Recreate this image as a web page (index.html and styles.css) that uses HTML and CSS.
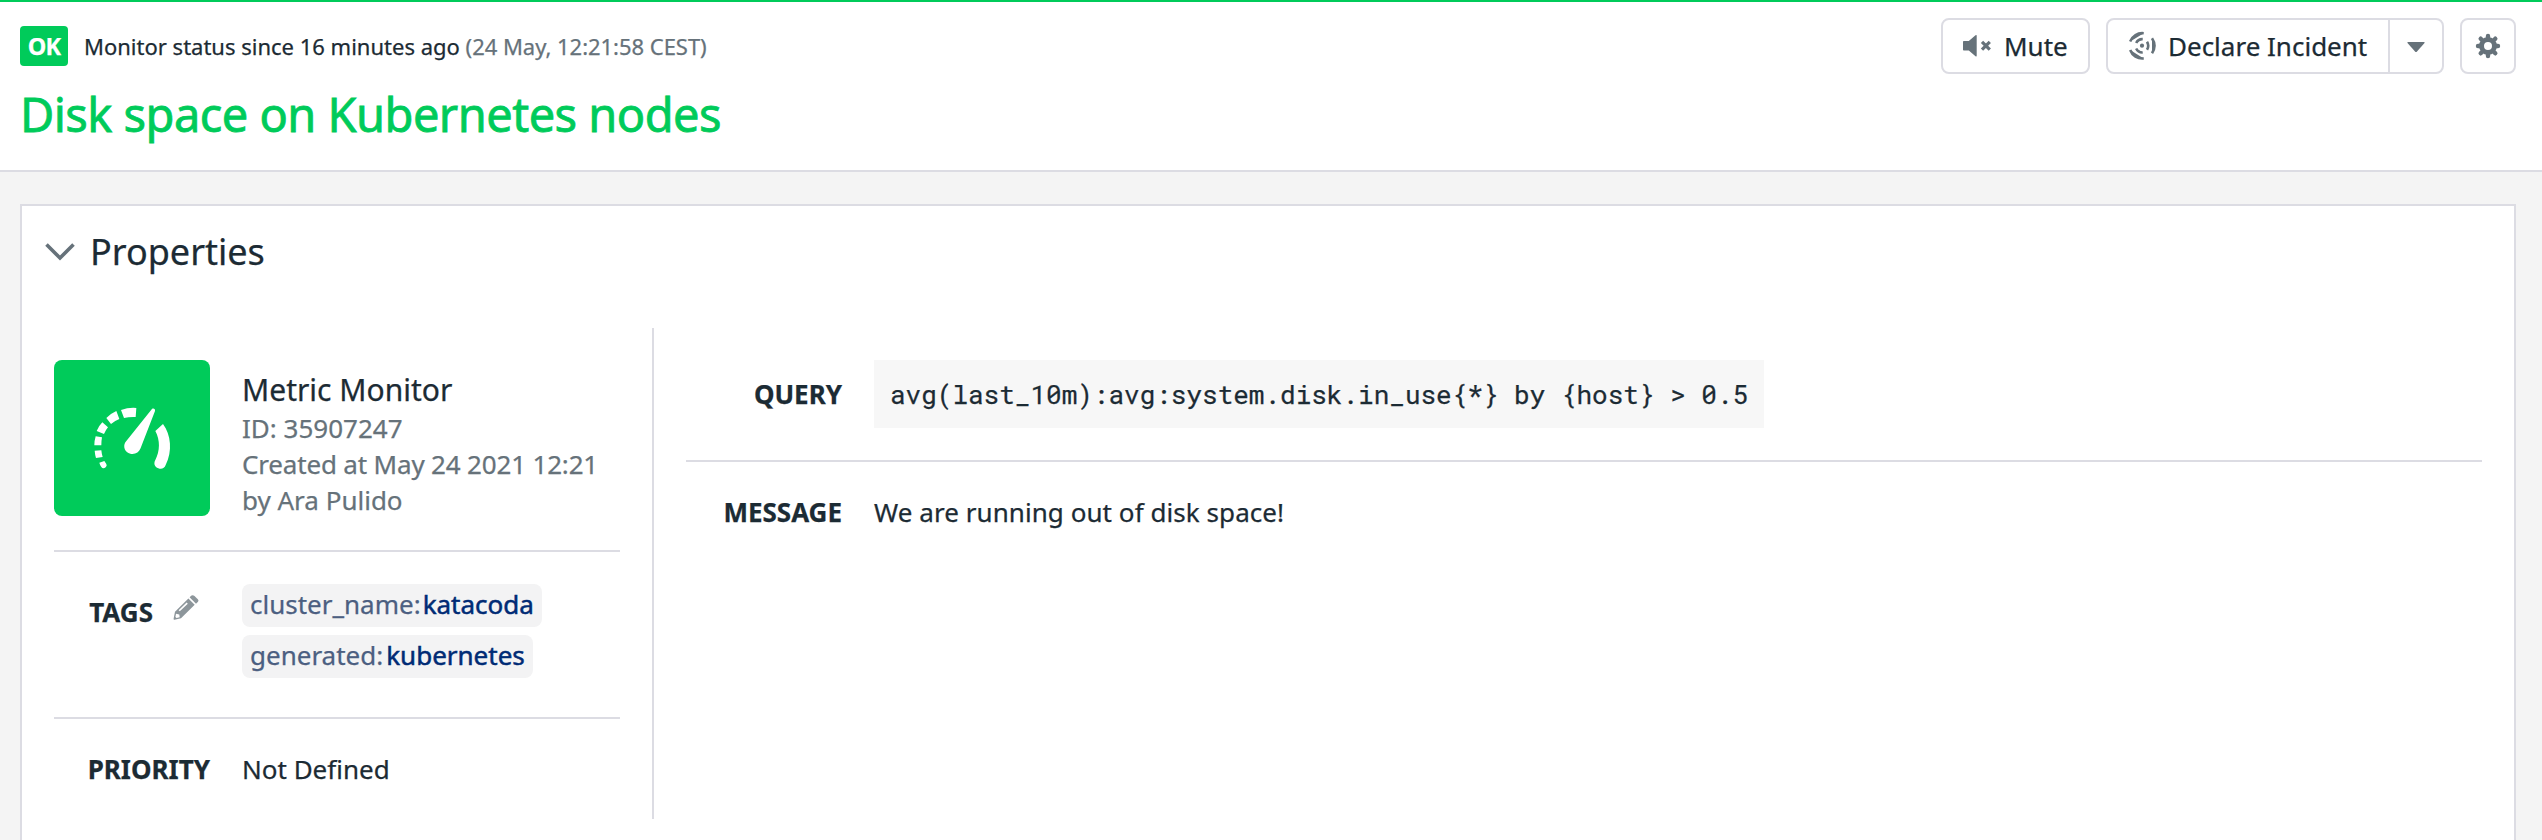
FILE: index.html
```html
<!DOCTYPE html>
<html lang="en">
<head>
<meta charset="utf-8">
<title>Disk space on Kubernetes nodes</title>
<link rel="stylesheet" href="styles.css">
</head>
<body>
<header class="header">
  <div class="status-row">
    <span class="badge">OK</span>
    <span class="status"><span class="status-main">Monitor status since 16 minutes ago</span> <span class="status-time">(24 May, 12:21:58 CEST)</span></span>
    <div class="actions">
      <button class="btn btn-mute">
        <svg class="icon-mute" width="30" height="26" viewBox="0 0 30 26"><path d="M.8 8h5L12.500 2.300q1.200-.8 1.200.5v20q0 1.300-1.200.5L5.800 17.500h-5Q0 17.500 0 16.700V8.800Q0 8 .8 8z"/><path d="M19 8.900l7.800 7.800M26.800 8.900L19 16.700" fill="none" stroke="currentColor" stroke-width="3.200"/></svg>
        <span class="label-mute">Mute</span>
      </button>
      <div class="split">
        <button class="btn btn-declare">
          <svg class="icon-declare" width="30" height="30" viewBox="0 0 30 30" fill="none" stroke="currentColor" stroke-width="2.600"><circle cx="14" cy="14.700" r="2.100" fill="currentColor" stroke="none"/><path d="M15.700 2.200A12.800 12.800 0 0 0 2.200 10.500M2.200 19A12.800 12.800 0 0 0 15.700 27.400M14.700 8.100A6.800 6.800 0 0 0 8.200 12M8.200 17.500A6.800 6.800 0 0 0 14.700 21.500M19 10.700Q21.500 14.700 19 18.700M24 7.200Q29 14.700 24 22.300"/></svg>
          <span class="label-declare">Declare Incident</span>
        </button>
        <button class="btn btn-caret"><svg class="caret" width="18" height="11" viewBox="0 0 18 11"><path d="M1 0h16q1 0 .5 1L10 9.500q-1 1-2 0L.5 1Q0 0 1 0z"/></svg></button>
      </div>
      <button class="btn btn-gear"><svg width="26" height="26" viewBox="-13 -13 26 26"><path fill-rule="evenodd" d="M-9 0a9 9 0 1 0 18 0a9 9 0 1 0-18 0zM-4 0a4 4 0 1 0 8 0a4 4 0 1 0-8 0z"/><g fill="none" stroke="currentColor" stroke-width="4.400" stroke-linecap="round"><path d="M0-8.500V-10M0 8.500V10M-8.500 0H-10M8.500 0H10M6-6l1.300-1.300M-6-6l-1.300-1.300M6 6l1.300 1.300M-6 6l-1.300 1.300"/></g></svg></button>
    </div>
  </div>
  <h1 class="title">Disk space on Kubernetes nodes</h1>
</header>
<main class="card">
  <div class="card-head">
    <svg class="chevron" width="30" height="18" viewBox="0 0 30 18"><path d="M1.500 1.500L15 15L28.500 1.500" fill="none" stroke="currentColor" stroke-width="3.600"/></svg>
    <h2 class="card-title">Properties</h2>
  </div>
  <div class="columns">
    <section class="left">
      <div class="monitor">
        <div class="tile">
          <svg width="156" height="156" viewBox="-79 -91 468 468">
            <path d="M122 59Q145 51 168 53L166 80Q147 79 131 83z"/>
            <path d="M78 83Q90 70 108 62L117 86Q102 92 92 101z"/>
            <path d="M66 96L83 111Q76 119 71 131L49 122Q55 107 66 96z"/>
            <path d="M46 138L65 141Q63 152 63 165L42 165Q42 151 46 138z"/>
            <path d="M43 181L63 180Q64 190 67 200L47 203Q44 193 43 181z"/>
            <path d="M57 217L72 212L78 221Q81 227 76 231Q68 237 63 230Q59 225 57 217z"/>
            <path d="M248 101C272 134 277 182 256 224C252 234 244 238 234 234C223 230 219 220 225 209C239 182 240 150 225 122z"/>
            <path d="M213 58C217 51 226 55 224 62L181 173C176 187 163 193 150 190C134 186 127 170 135 156z"/>
          </svg>
        </div>
        <div class="monitor-info">
          <div class="monitor-type">Metric Monitor</div>
          <div>ID: 35907247</div>
          <div class="created">Created at May 24 2021 12:21</div>
          <div>by Ara Pulido</div>
        </div>
      </div>
      <div class="row row-tags">
        <div class="key">TAGS <svg class="pencil" width="26" height="26" viewBox="0 0 26 26"><path d="M16.600 2.200L18.500.6Q19.800-.4 21.500 1L24.800 4.200Q26 5.500 25 6.800L23 8.800z"/><path fill-rule="evenodd" d="M15.400 3.400L21.700 9.800L8 23.200L1.500 24.800Q.4 25 .6 23.800L2 16.800zM5.600 15.200L6.800 16.300L14.800 8.800L13.600 7.600zM3 18.800L2.400 22L3.500 23L6.700 22.300L6.300 19.500z"/></svg></div>
        <div class="chips">
          <span class="chip chip-tight">cluster_name:<b>katacoda</b></span>
          <span class="chip">generated:<b>kubernetes</b></span>
        </div>
      </div>
      <div class="row row-priority"><div class="key">PRIORITY</div><div>Not Defined</div></div>
    </section>
    <section class="right">
      <div class="field field-query"><div class="key">QUERY</div><code class="query">avg(last_10m):avg:system.disk.in_use{*} by {host} &gt; 0.5</code></div>
      <div class="field field-message"><div class="key">MESSAGE</div><div class="message">We are running out of disk space!</div></div>
    </section>
  </div>
</main>
</body>
</html>
```
FILE: styles.css
```css
* { box-sizing: border-box; }
body { display: flex; flex-direction: column; margin: 0; height: 840px; background: #f4f4f4; color: #1c2b34; font: 26px/36px "Noto Sans", sans-serif; -webkit-text-stroke: 0.25px; }
h1, h2 { margin: 0; font-weight: 400; }
svg { display: block; fill: currentColor; flex: none; }
.header { flex: none; height: 172px; padding: 16px 26px 0 20px; background: #fff; border-top: 2px solid #00cb5a; border-bottom: 2px solid #dcdce3; }
.status-row { display: flex; align-items: center; height: 56px; }
.badge { width: 48px; height: 40px; border-radius: 4px; background: #00cb5a; color: #fff; font-size: 23.500px; font-weight: 700; line-height: 40px; text-align: center; letter-spacing: -0.8px; }
.status { margin-left: 16px; font-size: 22px; white-space: nowrap; }
.status-time { color: #66727a; letter-spacing: -0.03px; }
.actions { display: flex; gap: 16px; margin-left: auto; }
.btn { display: flex; align-items: center; height: 56px; padding: 0; border: 2px solid #dcdce3; border-radius: 8px; background: #fff; color: #66727a; font: inherit; }
.btn span { color: #1c2b34; white-space: nowrap; }
.btn-mute { width: 149px; padding-left: 20px; gap: 11px; }
.split { display: flex; }
.btn-declare { width: 284px; padding-left: 20px; gap: 10px; border-radius: 8px 0 0 8px; }
.btn-caret { width: 56px; margin-left: -2px; justify-content: center; border-radius: 0 8px 8px 0; }
.caret { margin-top: 2px; }
.btn-gear { width: 56px; justify-content: center; }
.title { margin-top: 10px; font-size: 47px; line-height: 60px; letter-spacing: -0.54px; color: #00cb5a; white-space: nowrap; -webkit-text-stroke: 0.8px; }
.card { flex: 1; min-height: 0; margin: 32px 26px 0 20px; background: #fff; border: 2px solid #dcdce3; border-bottom: 0; }
.card-head { display: flex; align-items: center; height: 92px; padding-left: 23px; gap: 15px; }
.chevron { color: #66727a; }
.card-title { font-size: 36px; line-height: 48px; }
.columns { display: flex; margin-top: 30px; height: 491px; }
.left { width: 632px; padding: 32px 32px 0; border-right: 2px solid #dcdce3; }
.monitor { display: flex; gap: 32px; height: 192px; border-bottom: 2px solid #dcdce3; color: #66727a; white-space: nowrap; }
.tile { width: 156px; height: 156px; border-radius: 8px; background: #00cb5a; color: #fff; }
.monitor-info { padding-top: 11px; }
.monitor-type { padding-bottom: 1px; font-size: 30px; line-height: 38px; color: #1c2b34; }
.created { letter-spacing: -0.17px; }
.row { display: grid; grid-template-columns: 156px 1fr; column-gap: 32px; }
.row-tags { height: 167px; padding-top: 32px; border-bottom: 2px solid #dcdce3; }
.row-priority { padding-top: 32px; }
.key { display: flex; justify-content: flex-end; font-weight: 700; }
.row-tags .key { padding: 10px 11px 0 0; gap: 20px; }
.pencil { margin-top: 1px; color: #8d969b; }
.chips { display: flex; flex-direction: column; align-items: flex-start; gap: 8px; }
.chip { height: 43px; padding: 0 8px; border-radius: 8px; background: #f3f3f4; color: #4c5f81; line-height: 40px; white-space: nowrap; }
.chip b { margin-left: 3px; font-weight: 400; color: #002b75; -webkit-text-stroke: 0.5px; }
.chip-tight b { margin-left: 2px; }
.right { flex: 1; margin: 32px 32px 0; }
.field { display: grid; grid-template-columns: 156px auto; justify-content: start; column-gap: 32px; }
.field-query { height: 102px; border-bottom: 2px solid #dcdce3; line-height: 68px; }
.query { height: 68px; padding: 0 16px; background: #f7f7f7; font: 26px/68px "Roboto Mono", "Noto Sans Mono", "DejaVu Sans Mono", monospace; white-space: pre; }
.field-message { padding-top: 32px; }
.message { letter-spacing: 0.06px; }
```
